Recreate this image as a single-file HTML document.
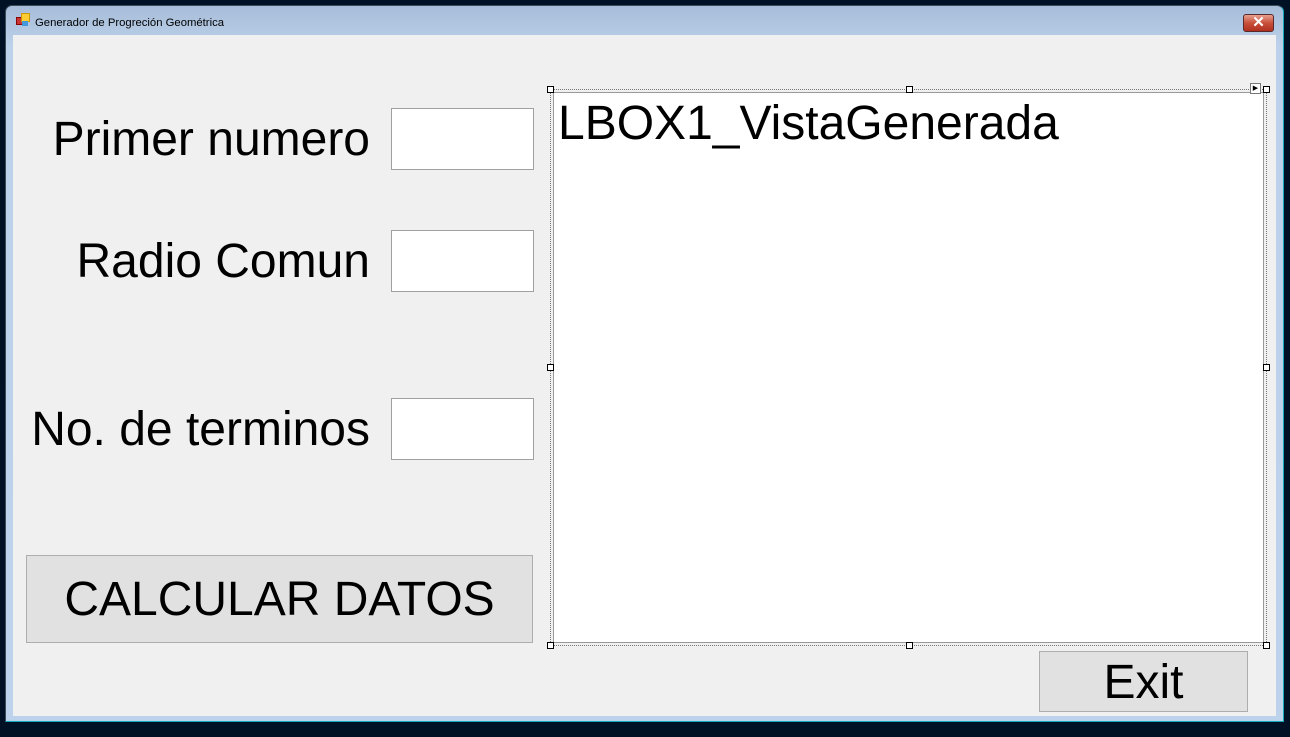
<!DOCTYPE html><html><head><style>
body{margin:0;width:1290px;height:737px;background:#001126;position:relative;overflow:hidden;font-family:"Liberation Sans",sans-serif}
.a{position:absolute}
.frame{left:5px;top:5px;width:1279px;height:717px;background:linear-gradient(#a6bcd8,#bcd2ea 40px,#bdd3ec);border:1px solid #3c4a5a;border-radius:7px 7px 0 0;box-sizing:border-box;border-bottom-color:#1ab;border-right-color:#1ab}
.client{left:13px;top:35px;width:1263px;height:681px;background:#f0f0f0}
.lbl{font-size:48px;color:#000;text-align:right;right:920px;white-space:nowrap}
.tb{background:#fff;border:1px solid #a0a0a0;width:143px;height:62px;box-sizing:border-box}
.btn{background:#e1e1e1;border:1px solid #adadad;box-sizing:border-box;text-align:center;color:#000}
.h{width:5px;height:5px;background:#fff;border:1px solid #000}
</style></head><body>
<div class="a frame"></div>
<div class="a" style="left:16px;top:17px;width:6px;height:6px;background:#c33;border:1px solid #800"></div>
<div class="a" style="left:21px;top:13px;width:7px;height:7px;background:#fc3;border:1px solid #c90"></div>
<div class="a" style="left:22px;top:21px;width:6px;height:5px;background:#49d"></div>
<div class="a" style="left:35px;top:17px;font-size:11.3px;color:#000">Generador de Progreción Geométrica</div>
<div class="a" style="left:1243px;top:14px;width:31px;height:18px;border:1px solid #5a2a2a;border-radius:3px;background:linear-gradient(#e8a090,#c8503a 50%,#b03020);box-sizing:border-box;color:#fff;font-weight:bold;font-size:15px;text-align:center;line-height:16px">✕</div>
<div class="a client"></div>
<div class="a lbl" style="top:112px">Primer numero</div>
<div class="a lbl" style="top:234px">Radio Comun</div>
<div class="a lbl" style="top:402px">No. de terminos</div>
<div class="a tb" style="left:391px;top:108px"></div>
<div class="a tb" style="left:391px;top:230px"></div>
<div class="a tb" style="left:391px;top:398px"></div>
<div class="a btn" style="left:26px;top:555px;width:507px;height:88px;font-size:48px;line-height:88px">CALCULAR DATOS</div>
<div class="a btn" style="left:1039px;top:651px;width:209px;height:61px;font-size:48px;line-height:62px">Exit</div>
<div class="a" style="left:550px;top:89px;width:717px;height:557px;border:1px dotted #777;box-sizing:border-box"></div>
<div class="a" style="left:553px;top:92px;width:711px;height:551px;background:#fff;border:1px solid #999;box-sizing:border-box"></div>
<div class="a" style="left:558px;top:96px;font-size:48px;color:#000">LBOX1_VistaGenerada</div>
<div class="a h" style="left:547px;top:86px"></div><div class="a h" style="left:906px;top:86px"></div><div class="a h" style="left:1263px;top:86px"></div>
<div class="a h" style="left:547px;top:364px"></div><div class="a h" style="left:1263px;top:364px"></div>
<div class="a h" style="left:547px;top:642px"></div><div class="a h" style="left:906px;top:642px"></div><div class="a h" style="left:1263px;top:642px"></div>
<div class="a" style="left:1250px;top:83px;width:9px;height:9px;background:#fff;border:1px solid #777;font-size:7px;line-height:9px;text-align:center">▶</div>
</body></html>
